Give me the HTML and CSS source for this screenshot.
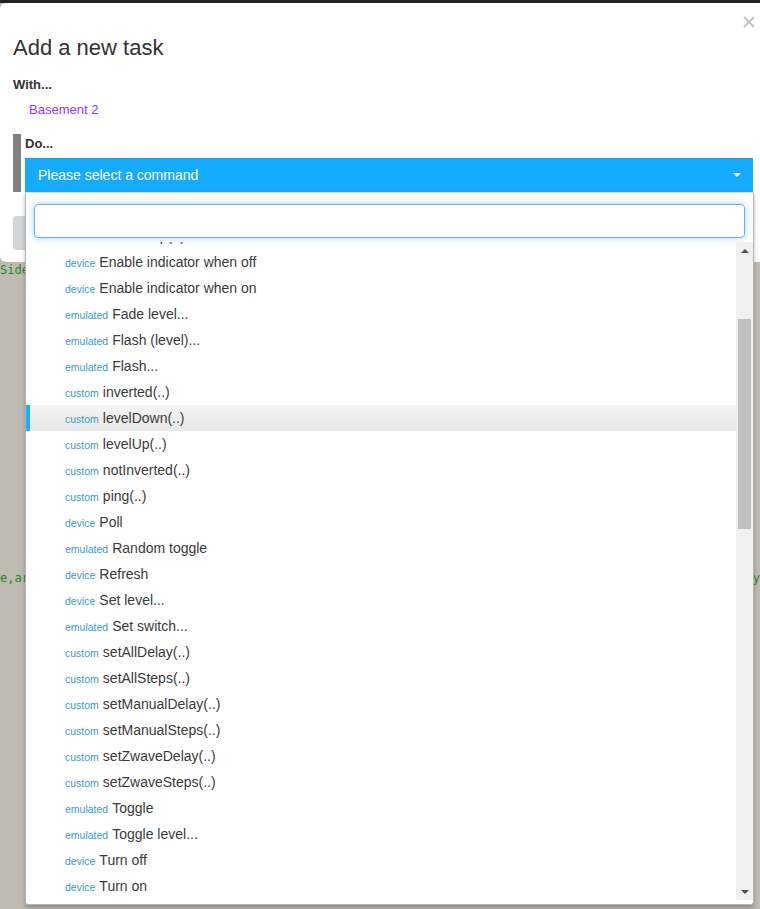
FILE: index.html
```html
<!DOCTYPE html>
<html>
<head>
<meta charset="utf-8">
<link rel="stylesheet" href="styles.css">
</head>
<body>
<div class="topbar"></div>
<div class="code">
  <div class="line l1">Side</div>
  <div class="line l2"><span>e,arr</span><span>y</span></div>
</div>

<div class="modal">
  <svg class="close" width="12" height="12" viewBox="0 0 12 12"><path d="M1 1L11 11M11 1L1 11" stroke="#c3c3c3" stroke-width="2"/></svg>
  <h1 class="title">Add a new task</h1>
  <div class="label">With...</div>
  <div class="device">Basement 2</div>
  <div class="do-group">
    <div class="do-bar"></div>
    <div class="do-body">
      <div class="label">Do...</div>
      <div class="select"><span>Please select a command</span><i class="caret"></i></div>
    </div>
  </div>
  <div class="buttons">
    <div class="btn grey"></div>
    <div class="btn teal"></div>
  </div>
</div>

<div class="dropdown">
  <div class="search"><div class="input"></div></div>
  <div class="results">
    <div class="viewport">
      <ul class="list">
        <li><span class="tag">custom</span><span class="name">doubleTap(..)</span></li>
        <li><span class="tag">device</span><span class="name">Enable indicator when off</span></li>
        <li><span class="tag">device</span><span class="name">Enable indicator when on</span></li>
        <li><span class="tag">emulated</span><span class="name">Fade level...</span></li>
        <li><span class="tag">emulated</span><span class="name">Flash (level)...</span></li>
        <li><span class="tag">emulated</span><span class="name">Flash...</span></li>
        <li><span class="tag">custom</span><span class="name">inverted(..)</span></li>
        <li class="hl"><span class="tag">custom</span><span class="name">levelDown(..)</span></li>
        <li><span class="tag">custom</span><span class="name">levelUp(..)</span></li>
        <li><span class="tag">custom</span><span class="name">notInverted(..)</span></li>
        <li><span class="tag">custom</span><span class="name">ping(..)</span></li>
        <li><span class="tag">device</span><span class="name">Poll</span></li>
        <li><span class="tag">emulated</span><span class="name">Random toggle</span></li>
        <li><span class="tag">device</span><span class="name">Refresh</span></li>
        <li><span class="tag">device</span><span class="name">Set level...</span></li>
        <li><span class="tag">emulated</span><span class="name">Set switch...</span></li>
        <li><span class="tag">custom</span><span class="name">setAllDelay(..)</span></li>
        <li><span class="tag">custom</span><span class="name">setAllSteps(..)</span></li>
        <li><span class="tag">custom</span><span class="name">setManualDelay(..)</span></li>
        <li><span class="tag">custom</span><span class="name">setManualSteps(..)</span></li>
        <li><span class="tag">custom</span><span class="name">setZwaveDelay(..)</span></li>
        <li><span class="tag">custom</span><span class="name">setZwaveSteps(..)</span></li>
        <li><span class="tag">emulated</span><span class="name">Toggle</span></li>
        <li><span class="tag">emulated</span><span class="name">Toggle level...</span></li>
        <li><span class="tag">device</span><span class="name">Turn off</span></li>
        <li><span class="tag">device</span><span class="name">Turn on</span></li>
      </ul>
    </div>
    <div class="scrollbar">
      <div class="arrow up"></div>
      <div class="track"><div class="thumb"></div></div>
      <div class="arrow down"></div>
    </div>
  </div>
</div>
</body>
</html>
```

FILE: styles.css
```css
* { box-sizing: border-box; }
html, body { margin: 0; padding: 0; }
body {
  width: 760px;
  height: 909px;
  overflow: hidden;
  background: #bfbbb3;
  font-family: "Liberation Sans", Arial, sans-serif;
  color: #333;
  position: relative;
}
.topbar { height: 3px; background: #222; }

.code {
  font-family: "DejaVu Sans Mono", monospace;
  font-size: 12px;
  color: #1f8a1f;
  line-height: 14px;
}
.code .line { white-space: pre; }
.code .l1 { margin-top: 260px; }
.code .l2 { margin-top: 294px; display: flex; justify-content: space-between; width: 760px; }

.modal {
  position: absolute;
  top: 3px;
  left: 0;
  right: 0;
  height: 259px;
  background: #fff;
  border-radius: 6px 0 0 6px;
  padding: 33px 7px 12px 13px;
}
.close { position: absolute; top: 13px; right: 5px; }
.title {
  margin: 0;
  font-size: 22px;
  font-weight: normal;
  line-height: 24px;
  color: #333;
}
.label {
  font-size: 13px;
  font-weight: bold;
  line-height: 18px;
  color: #333;
}
.modal > .label { margin-top: 16px; }
.device {
  margin-top: 7px;
  padding-left: 16px;
  font-size: 13px;
  line-height: 18px;
  color: #9b36ef;
}
.do-group {
  display: flex;
  gap: 4px;
  margin-top: 15px;
}
.do-bar { width: 8px; background: #808080; }
.do-body { flex: 1; }
.do-body .label { padding-top: 1px; }
.select {
  margin-top: 5px;
  height: 34px;
  background: #15abff;
  border-top: 1px solid #1c9ce4;
  color: #fff;
  font-size: 14px;
  display: flex;
  align-items: center;
  justify-content: space-between;
  padding: 0 12px 2px 13px;
}
.caret {
  width: 0; height: 0;
  border-left: 4px solid transparent;
  border-right: 4px solid transparent;
  border-top: 4px solid #fff;
  margin-top: 1px;
}
.buttons {
  margin-top: 24px;
  display: flex;
  justify-content: space-between;
}
.btn { height: 34px; border-radius: 3px; }
.btn.grey { width: 90px; background: #d2d6d7; }
.btn.teal { width: 120px; background: #5aa6b6; }

.dropdown {
  position: absolute;
  top: 192px;
  left: 25px;
  width: 729px;
  height: 713px;
  background: #fff;
  border: 1px solid #b5b5b5;
  border-top-color: #ddd;
  border-radius: 0 0 3px 3px;
  box-shadow: 0 3px 4px rgba(0,0,0,0.25);
  display: flex;
  flex-direction: column;
}
.search { padding: 11px 8px 4px 8px; }
.input {
  height: 34px;
  border: 1px solid #66afe9;
  border-radius: 4px;
  box-shadow: 0 0 6px rgba(102,175,233,0.6);
}
.results {
  display: flex;
  height: 658px;
}
.viewport { flex: 1; overflow: hidden; }
.list {
  list-style: none;
  margin: -19px 0 0 0;
  padding: 0;
}
.list li {
  height: 26px;
  line-height: 26px;
  padding-left: 39px;
  white-space: nowrap;
}
.list li.hl {
  background: linear-gradient(#f5f5f5, #e7e7e7);
  border-left: 4px solid #14b2ff;
  padding-left: 35px;
}
.tag { font-size: 10.5px; color: #3a9dbf; }
.name { font-size: 14px; color: #3a3a3a; margin-left: 4px; }

.scrollbar {
  width: 17px;
  background: #f0f0f0;
  display: flex;
  flex-direction: column;
}
.arrow {
  height: 17px;
  display: flex;
  align-items: center;
  justify-content: center;
}
.arrow::after {
  content: "";
  width: 0; height: 0;
  border-left: 4px solid transparent;
  border-right: 4px solid transparent;
}
.arrow.up::after { border-bottom: 4px solid #505050; }
.arrow.down::after { border-top: 4px solid #505050; }
.track { flex: 1; padding-top: 60px; }
.thumb {
  margin-left: 2px;
  width: 13px;
  height: 210px;
  background: #c1c1c1;
}
```
